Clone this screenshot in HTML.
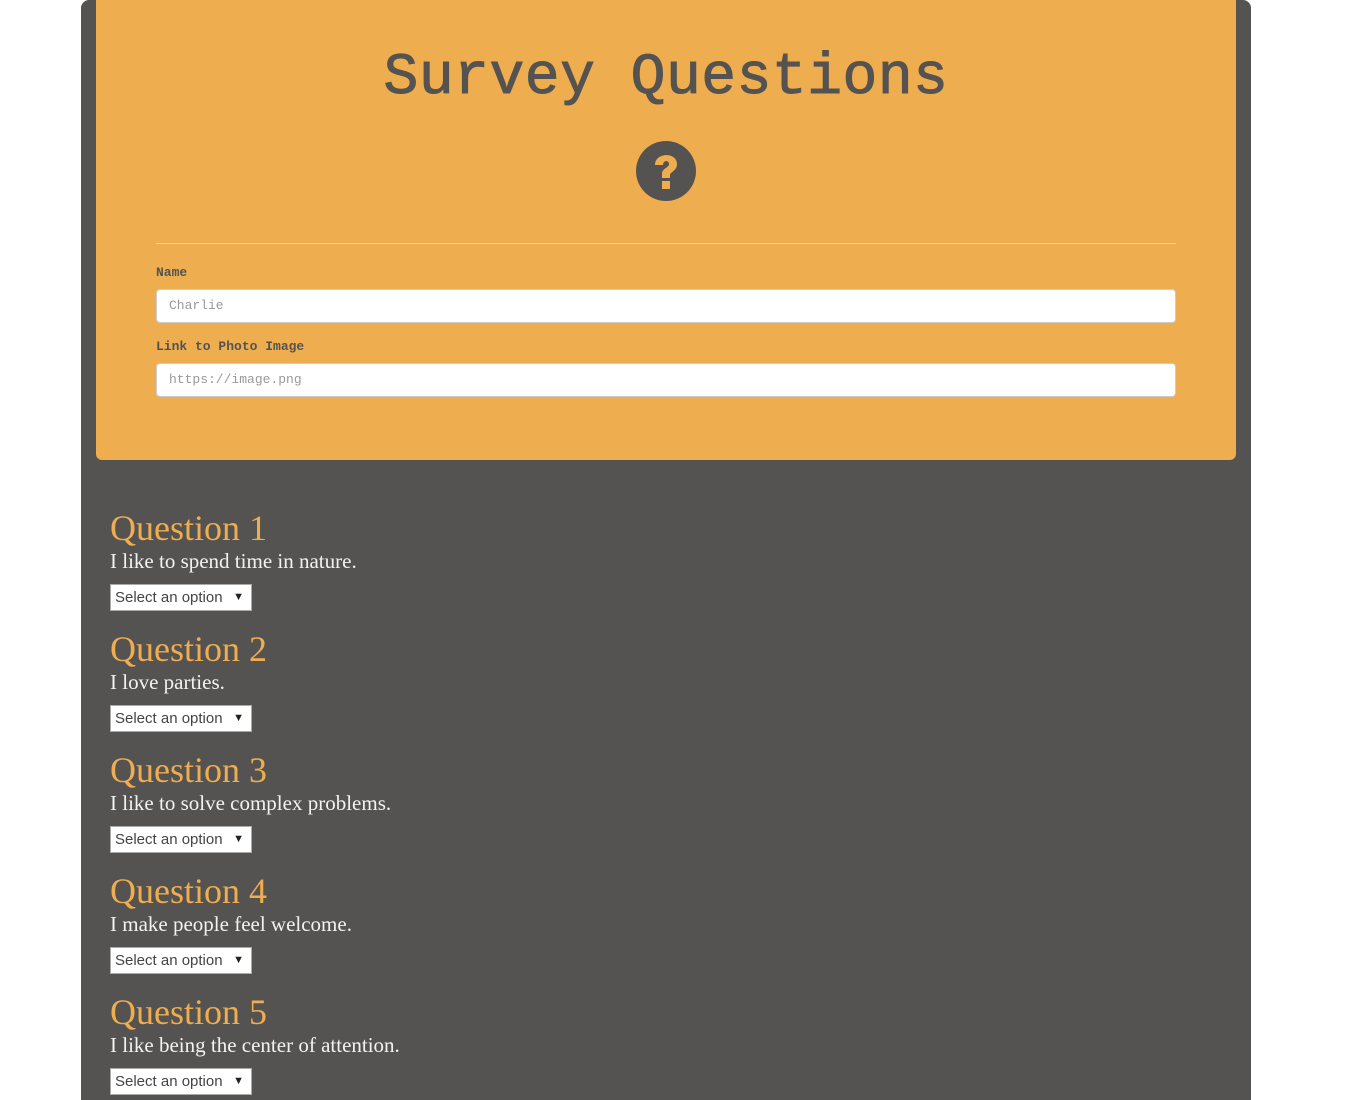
<!DOCTYPE html>
<html><head><meta charset="utf-8"><style>
*{box-sizing:border-box;margin:0;padding:0}
body{width:1360px;height:1080px;overflow:hidden;background:#fff;font-family:"Liberation Serif",serif}
.outer{position:absolute;left:81px;top:0;width:1170px;height:1100px;background:#555351;border-radius:8px 8px 0 0}
.jumbo{position:absolute;left:15px;top:0;width:1140px;height:460px;background:#eead4f;border-radius:0 0 6px 6px}
h1{position:absolute;left:0;width:100%;top:44px;text-align:center;font-family:"Liberation Mono",monospace;font-size:58px;font-weight:normal;color:#555351;line-height:70px;letter-spacing:0.5px;-webkit-text-stroke:1px #555351}
.icon{position:absolute;left:539px;top:140px}
hr{position:absolute;left:60px;top:243px;width:1020px;border:0;border-top:1px solid #f5d39a}
.lbl{position:absolute;left:60px;font-family:"Liberation Mono",monospace;font-weight:bold;font-size:13px;color:#555351}
.inp{position:absolute;left:60px;width:1020px;height:34px;background:#fff;border:1px solid #ccc;border-radius:4px;font-family:"Liberation Mono",monospace;font-size:13px;color:#999;padding:7px 12px;line-height:18px}
.q{position:absolute;left:110px}
.q h2{font-family:"Liberation Serif",serif;font-weight:normal;font-size:36px;color:#eead4f;line-height:40px;height:40px}
.q p{font-size:21px;color:#f2f2f2;line-height:26px;margin-top:0;height:36px}
.sel{width:142px;height:27px;background:#fff;border:1px solid #aaa;font-family:"Liberation Sans",sans-serif;font-size:15px;color:#444;padding:3px 4px;line-height:19px;position:relative}
.sel span{position:absolute;right:7px;top:3px;font-size:11px;color:#222}
</style></head><body>
<div class="outer">
<div class="jumbo">
<h1>Survey Questions</h1>
<svg class="icon" width="62" height="62" viewBox="0 0 62 62"><circle cx="31" cy="31" r="30" fill="#555351"/><path d="M20 25 C20 12 42 12 42 24 C42 31 35 32 35 35 L35 38 L27 38 L27 34 C27 28 34 28 34 24 C34 20 28 20 28 25 Z" fill="#eead4f"/><rect x="27" y="41" width="8" height="8" fill="#eead4f"/></svg>
<hr>
<div class="lbl" style="top:265px">Name</div>
<div class="inp" style="top:289px">Charlie</div>
<div class="lbl" style="top:339px">Link to Photo Image</div>
<div class="inp" style="top:363px">https://image.png</div>
</div>
</div>
<div class="q" style="top:508px"><h2>Question 1</h2><p>I like to spend time in nature.</p><div class="sel">Select an option<span>▼</span></div></div>
<div class="q" style="top:629px"><h2>Question 2</h2><p>I love parties.</p><div class="sel">Select an option<span>▼</span></div></div>
<div class="q" style="top:750px"><h2>Question 3</h2><p>I like to solve complex problems.</p><div class="sel">Select an option<span>▼</span></div></div>
<div class="q" style="top:871px"><h2>Question 4</h2><p>I make people feel welcome.</p><div class="sel">Select an option<span>▼</span></div></div>
<div class="q" style="top:992px"><h2>Question 5</h2><p>I like being the center of attention.</p><div class="sel">Select an option<span>▼</span></div></div>
</body></html>
